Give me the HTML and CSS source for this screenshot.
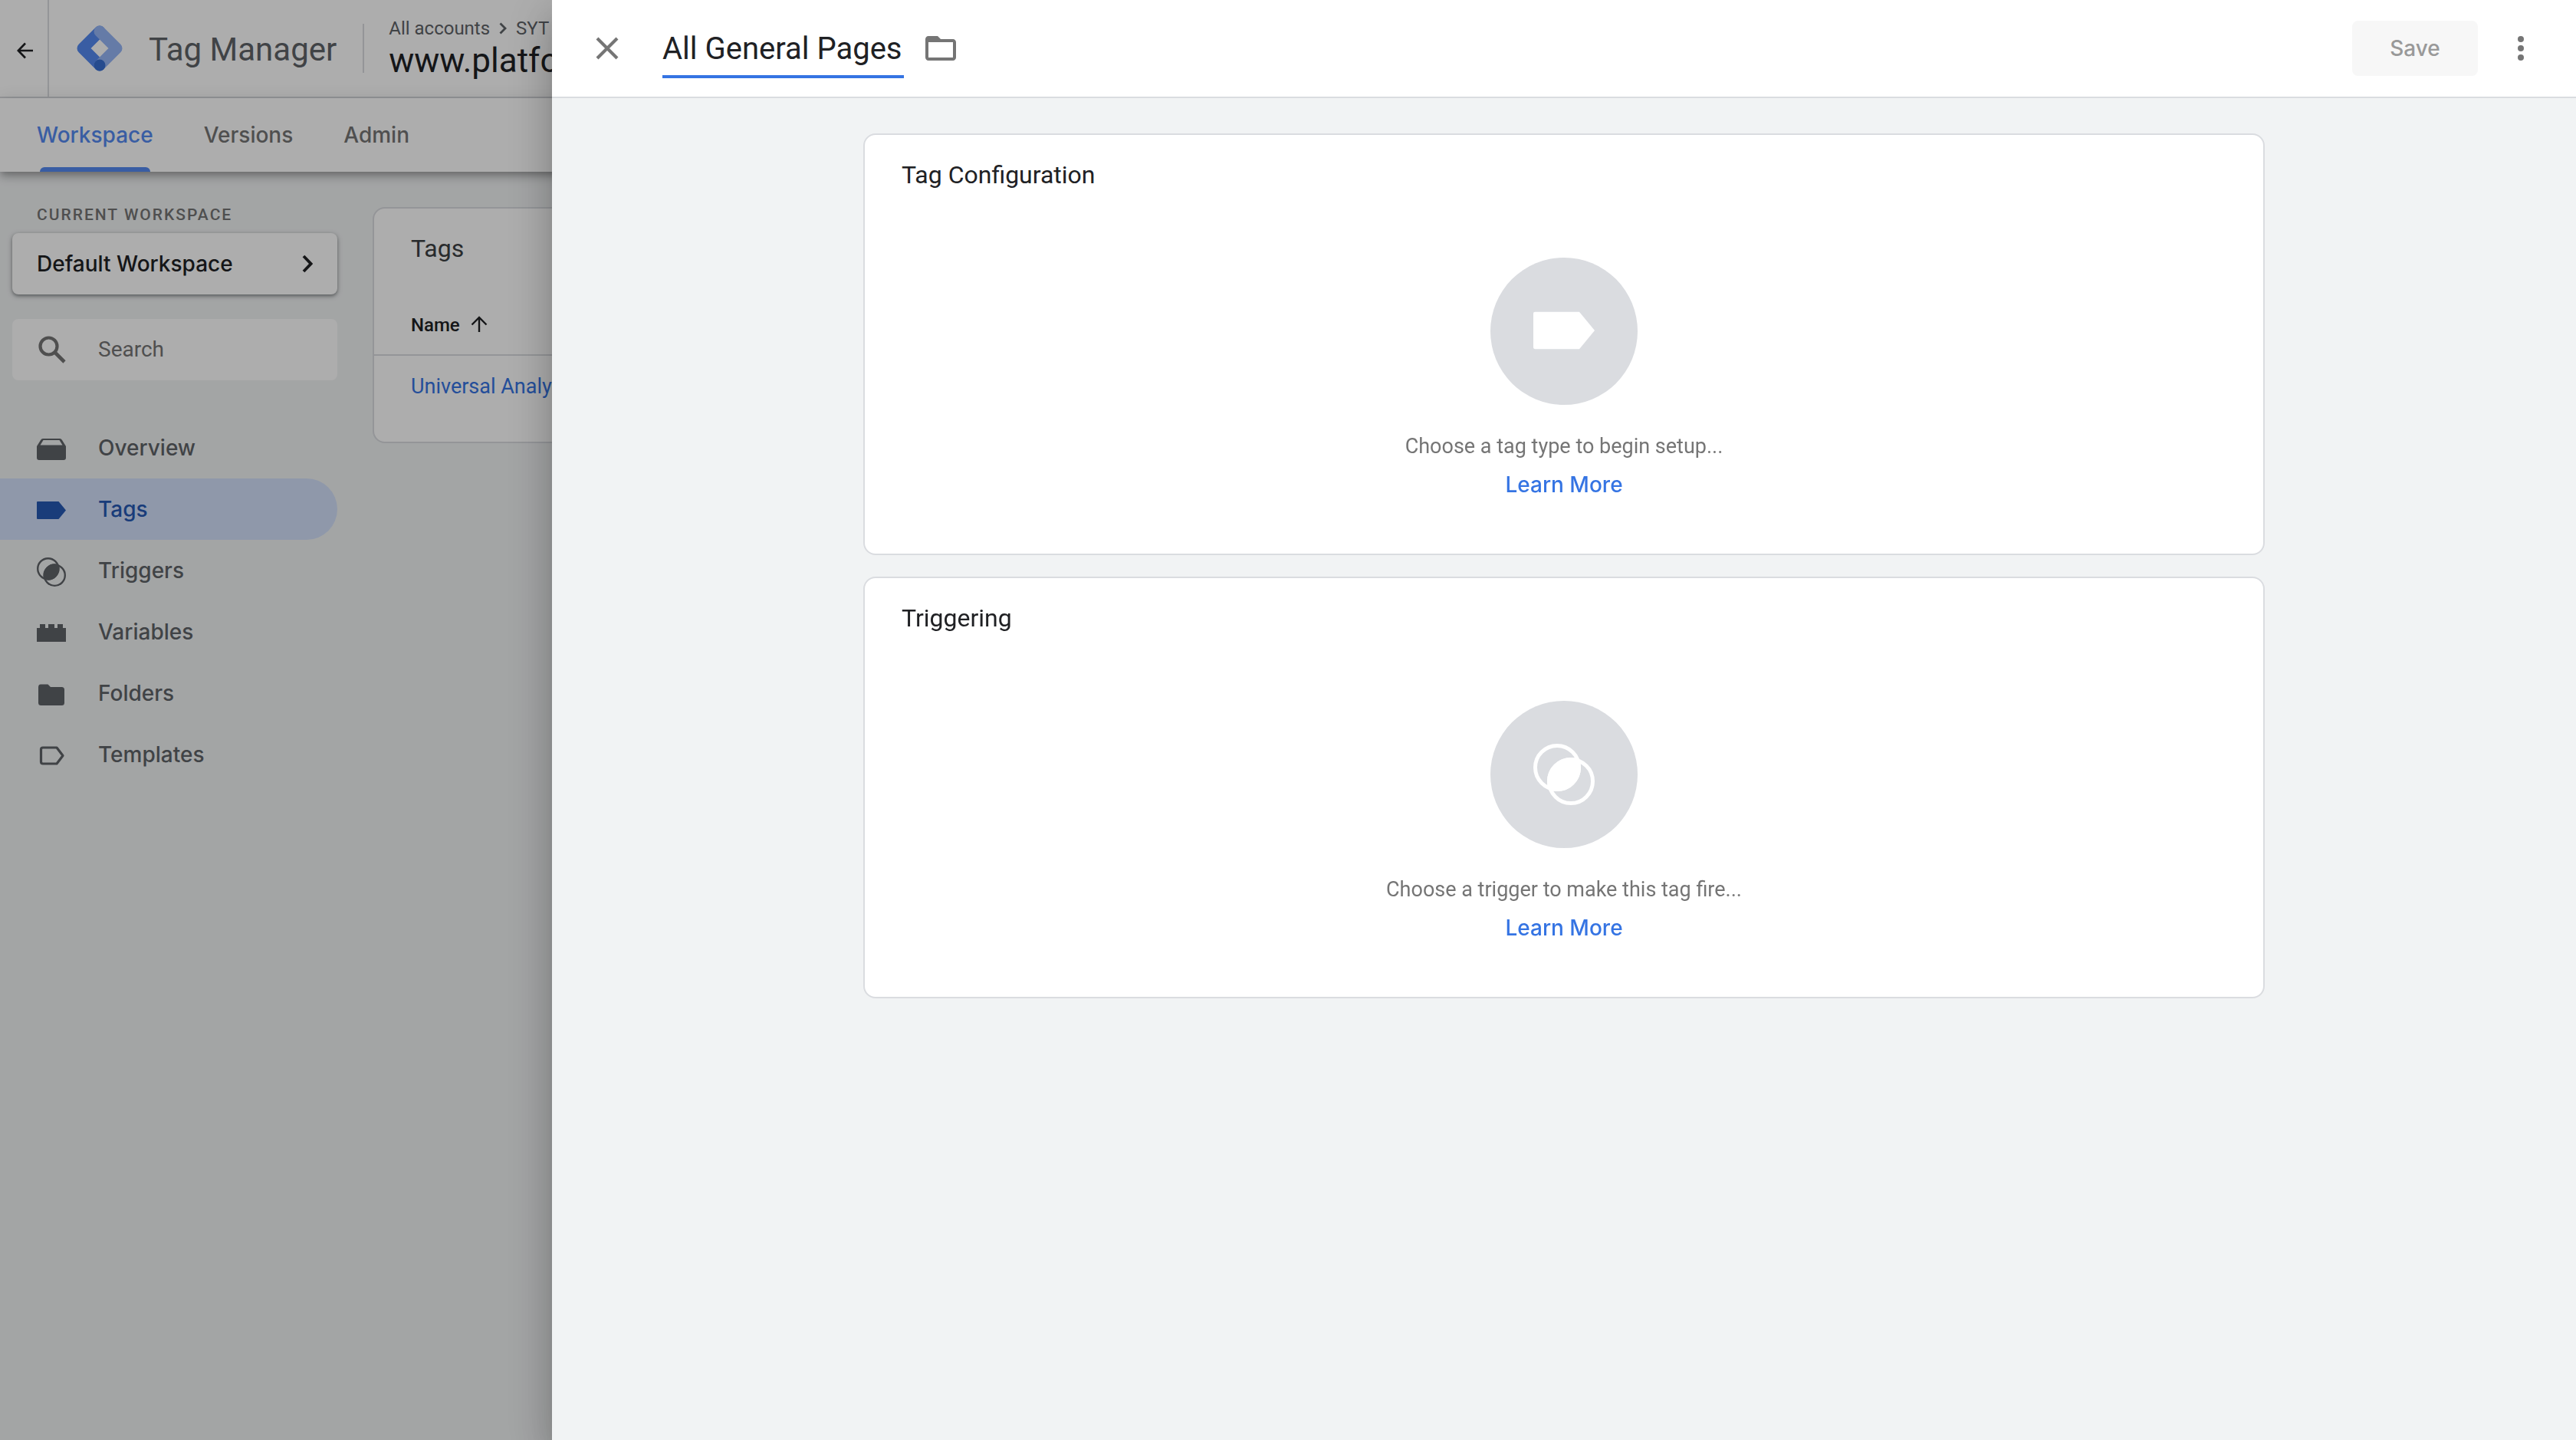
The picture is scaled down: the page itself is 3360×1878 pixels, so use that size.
FILE: index.html
```html
<!DOCTYPE html>
<html lang="en">
<head>
<meta charset="utf-8">
<title>Tag Manager</title>
<link rel="stylesheet" href="styles.css">
</head>
<body>
<svg class="sprite" aria-hidden="true">
  <symbol id="i-tag" viewBox="0 0 38 38"><path d="M1 7h27.500l9.500 11.500L28.500 30H1q-1 0-1-1V8q0-1 1-1z"/></symbol>
  <symbol id="i-trigger" viewBox="0 0 80 80">
    <g fill="none" stroke="currentColor" stroke-width="5"><circle cx="31" cy="31" r="28.500"/><circle cx="49" cy="49" r="28.500"/></g>
    <path d="M60 20A31 31 0 0 1 20 60A31 31 0 0 1 60 20z"/>
  </symbol>
</svg>

<div class="app">
  <header class="topbar">
    <button class="back" type="button" aria-label="Back">
      <svg class="icon-back" viewBox="0 0 22 22"><path d="M21 11H2M11 1.500L1.800 11l9.200 9.500" fill="none" stroke="currentColor" stroke-width="2.600"/></svg>
    </button>
    <svg class="logo" viewBox="0 0 60 60" aria-hidden="true">
      <path d="M30 8L8 30L30 52" fill="none" stroke="#5489f0" stroke-width="15" stroke-linejoin="round" stroke-linecap="round"/>
      <path d="M30 8L52 30L30 52" fill="none" stroke="#96b6f7" stroke-width="15" stroke-linejoin="round" stroke-linecap="round"/>
      <circle cx="30" cy="52" r="7.500" fill="#386fd2"/>
    </svg>
    <span class="product">Tag Manager</span>
    <div class="container-info">
      <div class="crumbs"><a href="#accounts">All accounts</a>
        <svg class="crumb-chevron" viewBox="0 0 10 16"><path d="M1.500 1.500L8 8l-6.500 6.500" fill="none" stroke="currentColor" stroke-width="2.800"/></svg>
        <a href="#account">SYT</a></div>
      <div class="site">www.platform</div>
    </div>
  </header>
  <nav class="tabs" aria-label="Sections">
    <a class="tab tab-active" href="#workspace">Workspace</a>
    <a class="tab" href="#versions">Versions</a>
    <a class="tab" href="#admin">Admin</a>
  </nav>

  <div class="workarea">
    <aside class="sidebar">
      <p class="caption">CURRENT WORKSPACE</p>
      <button class="workspace" type="button">Default Workspace
        <svg class="ws-chevron" viewBox="0 0 14 24"><path d="M2 2l9.500 10L2 22" fill="none" stroke="currentColor" stroke-width="3.800"/></svg>
      </button>
      <label class="search">
        <svg class="icon-search" viewBox="0 0 36 36"><circle cx="13.500" cy="13.500" r="11" fill="none" stroke="currentColor" stroke-width="4.200"/><path d="M21.500 21.500L34 34" stroke="currentColor" stroke-width="4.600"/></svg>
        <input type="search" placeholder="Search" aria-label="Search">
      </label>
      <nav class="menu" aria-label="Workspace">
        <a class="item" href="#overview"><svg viewBox="0 0 38 38"><path fill-rule="evenodd" d="M8 5h22q2 0 3 2l5 8v15q0 3-3 3H3q-3 0-3-3V15l5-8q1-2 3-2zM8.500 7L4.500 13.500h29L29.500 7z"/></svg>Overview</a>
        <a class="item item-active" href="#tags"><svg><use href="#i-tag"/></svg>Tags</a>
        <a class="item" href="#triggers"><svg><use href="#i-trigger"/></svg>Triggers</a>
        <a class="item" href="#variables"><svg viewBox="0 0 38 38"><path d="M0 12h4V7h7v5h4V7h8v5h4V7h7v5h4v18H0z"/></svg>Variables</a>
        <a class="item" href="#folders"><svg viewBox="0 0 38 38"><path d="M5 5.500h9.500L18 9h14.500q3.500 0 3.500 3.500v17q0 3.500-3.500 3.500H5.500Q2 33 2 29.500v-20q0-4 3-4z"/></svg>Folders</a>
        <a class="item" href="#templates"><svg viewBox="0 0 38 38"><path d="M8 8h18l8 10.500L26 29H8q-2.500 0-2.500-2.500v-16Q5.500 8 8 8z" fill="none" stroke="currentColor" stroke-width="3.200" stroke-linejoin="round"/></svg>Templates</a>
      </nav>
    </aside>
    <main class="list">
      <h2>Tags</h2>
      <table>
        <thead><tr><th scope="col">Name <svg class="sort" viewBox="0 0 22 22"><path d="M11 21V2M1.500 11.500L11 2l9.500 9.500" fill="none" stroke="currentColor" stroke-width="2.400"/></svg></th></tr></thead>
        <tbody><tr><td><a href="#ua">Universal Analytics</a></td></tr></tbody>
      </table>
    </main>
  </div>
</div>

<div class="scrim"></div>

<section class="drawer" role="dialog" aria-label="Edit tag">
  <header class="drawer-bar">
    <button class="icon-btn close" type="button" aria-label="Close"><svg viewBox="0 0 48 48"><path d="M11 11l26 26M37 11L11 37" stroke="currentColor" stroke-width="4.200"/></svg></button>
    <input class="tag-name" type="text" value="All General Pages" aria-label="Tag name">
    <button class="icon-btn" type="button" aria-label="Choose folder"><svg viewBox="0 0 24 24"><path d="M20 6h-8l-2-2H4c-1.100 0-1.990.9-1.990 2L2 18c0 1.100.9 2 2 2h16c1.100 0 2-.9 2-2V8c0-1.100-.9-2-2-2zm0 12H4V8h16v10z"/></svg></button>
    <button class="save" type="button" disabled>Save</button>
    <button class="icon-btn more" type="button" aria-label="More actions"><svg viewBox="0 0 48 48"><circle cx="24" cy="12" r="4"/><circle cx="24" cy="24" r="4"/><circle cx="24" cy="36" r="4"/></svg></button>
  </header>
  <div class="drawer-body">
    <article class="card">
      <h3>Tag Configuration</h3>
      <div class="badge"><svg><use href="#i-tag"/></svg></div>
      <p>Choose a tag type to begin setup...</p>
      <a href="#learn-tags">Learn More</a>
    </article>
    <article class="card">
      <h3>Triggering</h3>
      <div class="badge"><svg><use href="#i-trigger"/></svg></div>
      <p>Choose a trigger to make this tag fire...</p>
      <a href="#learn-triggers">Learn More</a>
    </article>
  </div>
</section>
</body>
</html>
```
FILE: styles.css
```css
* { box-sizing: border-box; }
body { margin: 0; background: #f1f3f4; color: #202124; font-family: Roboto, "Noto Sans", sans-serif; font-size: 27px; line-height: 32px; }
a { color: inherit; text-decoration: none; }
button, input { font: inherit; color: inherit; border: 0; background: none; padding: 0; margin: 0; outline: 0; }
h2, h3, p { margin: 0; font-weight: 400; }
svg { display: block; fill: currentColor; flex: none; }
.sprite { position: absolute; width: 0; height: 0; }

.app { min-height: 100vh; overflow: hidden; }

/* Product bar */
.topbar { display: flex; align-items: center; height: 128px; background: #fff; border-bottom: 2px solid #dadce0; }
.back { display: flex; align-items: center; justify-content: flex-end; align-self: stretch; width: 64px; padding: 6px 18px 0 0; border-right: 2px solid #dadce0; }
.icon-back { width: 22px; height: 22px; }
.logo { width: 60px; height: 60px; margin: 0 34px 0 36px; }
.product { padding-top: 4px; font-size: 42px; line-height: 64px; color: #5f6368; }
.container-info { display: flex; flex-direction: column; justify-content: center; height: 64px; margin-left: 34px; padding-left: 32px; border-left: 2px solid #dadce0; white-space: nowrap; }
.crumbs { display: flex; align-items: center; gap: 12px; font-size: 24px; line-height: 32px; color: #5f6368; }
.crumb-chevron { width: 10px; height: 16px; }
.site { font-size: 44px; line-height: 52px; }

.tabs { position: relative; display: flex; gap: 66px; height: 96px; padding: 0 48px; background: #fff; color: #757575; font: 500 28px/96px Inter, Roboto, sans-serif; box-shadow: 0 4px 8px -2px rgba(0,0,0,.2), 0 8px 10px rgba(0,0,0,.14), 0 2px 20px rgba(0,0,0,.12); }
.tab { display: flex; flex-direction: column; }
.tab-active { color: #5489f0; }
.tab-active::after { content: ""; height: 6px; margin: -6px 4px 0; border-radius: 6px 6px 0 0; background: currentColor; }

.workarea { display: flex; align-items: flex-start; gap: 46px; }

/* Sidebar */
.sidebar { flex: none; width: 440px; padding-top: 40px; }
.caption { padding-left: 48px; font-size: 21px; font-weight: 500; color: #757575; letter-spacing: 2px; }
.workspace { display: flex; align-items: center; justify-content: space-between; width: 424px; height: 80px; margin: 8px 0 32px 16px; padding: 0 32px; border-radius: 8px; background: #fff; font: 500 28px/40px Inter, Roboto, sans-serif; box-shadow: 0 2px 4px rgba(60,64,67,.5), 0 2px 8px rgba(60,64,67,.2); }
.ws-chevron { width: 14px; height: 24px; }
.search { display: flex; align-items: center; gap: 42px; height: 80px; margin: 0 0 48px 16px; padding: 0 34px; border-radius: 8px; background: #fff; color: #757575; font-size: 28px; }
.search input { flex: 1; min-width: 0; }
.search input::placeholder { color: inherit; opacity: 1; }
.icon-search { width: 36px; height: 36px; }
.item { display: flex; align-items: center; gap: 42px; height: 80px; padding-left: 48px; border-radius: 0 40px 40px 0; color: #5f6368; font: 500 28px/40px Inter, Roboto, sans-serif; }
.item svg { width: 38px; height: 38px; margin-top: 4px; }
.item-active { background: #d3e1fb; color: #2659b4; }

/* Tag list */
.list { flex: 1; margin: 46px 48px 0 0; border: 2px solid #dadce0; border-radius: 16px; background: #fff; }
.list h2 { padding: 32px 48px; font-size: 32px; line-height: 40px; color: #3c4043; }
.list table { width: 100%; border-spacing: 0; text-align: left; }
.list th { height: 88px; padding: 10px 48px 0; border-bottom: 2px solid #dadce0; font-size: 24px; font-weight: 500; }
.list td { height: 112px; padding: 0 48px 32px; color: #3574e3; }
.sort { display: inline-block; width: 22px; height: 22px; margin-left: 8px; vertical-align: -2px; }

/* Editor drawer */
.scrim { position: fixed; inset: 0; background: rgba(0,0,0,.32); }
.drawer { position: fixed; inset: 0 0 0 720px; display: flex; flex-direction: column; background: #f1f3f4; box-shadow: 0 16px 20px -10px rgba(0,0,0,.2), 0 32px 48px 4px rgba(0,0,0,.14), 0 12px 60px 10px rgba(0,0,0,.12); }
.drawer-bar { display: flex; align-items: center; flex: none; height: 128px; padding: 0 48px; background: #fff; border-bottom: 2px solid #dadce0; }
.icon-btn { flex: none; width: 48px; height: 48px; color: #757575; }
.icon-btn svg { width: 48px; height: 48px; }
.close { margin-right: 48px; }
.tag-name { field-sizing: content; height: 78px; margin-right: 24px; padding: 4px 2px 0 0; border-bottom: 4px solid #3574e3; font-size: 40px; }
.save { width: 164px; height: 72px; margin-left: auto; border-radius: 8px; background: #f7f7f7; color: #999; font: 500 28px/40px Inter, Roboto, sans-serif; }
.more { margin-left: 32px; }
.drawer-body { flex: 1; overflow: auto; padding: 46px 48px; }
.card { display: flex; flex-direction: column; align-items: center; max-width: 1828px; margin: 0 auto 28px; padding: 30px 48px 68px; border: 2px solid #dadce0; border-radius: 16px; background: #fff; }
.card h3 { align-self: stretch; margin-bottom: 86px; font-size: 32px; line-height: 44px; }
.badge { display: grid; place-items: center; width: 192px; height: 192px; margin-bottom: 34px; border-radius: 50%; background: #dadce0; color: #fff; }
.badge svg { width: 80px; height: 80px; }
.card p { margin-bottom: 8px; line-height: 40px; color: #757575; }
.card a { color: #3574e3; font: 500 28px/44px Inter, Roboto, sans-serif; }
```
